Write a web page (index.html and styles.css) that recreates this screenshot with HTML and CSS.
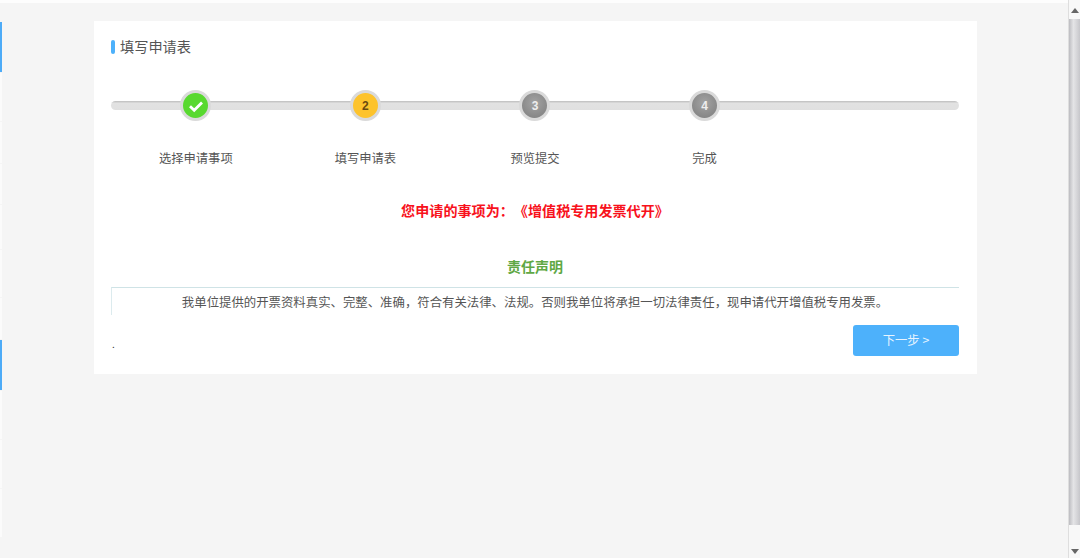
FILE: index.html
```html
<!DOCTYPE html>
<html lang="zh-CN">
<head>
<meta charset="utf-8">
<title>填写申请表</title>
<link rel="stylesheet" href="styles.css">
</head>
<body>
<div class="page">
  <aside class="rail">
    <i class="rail-item rail-active"></i>
    <i class="rail-item r48"></i>
    <i class="rail-item r41"></i>
    <i class="rail-item r40"></i>
    <i class="rail-item r44"></i>
    <i class="rail-item r47"></i>
    <i class="rail-item r41"></i>
    <i class="rail-item rail-active"></i>
    <i class="rail-item r48"></i>
    <i class="rail-item r48"></i>
    <i class="rail-item r48"></i>
  </aside>
  <main class="content">
    <section class="card">
      <h1 class="title">填写申请表</h1>
      <div class="track">
        <div class="dot dot-done">
          <svg class="check" viewBox="0 0 16 16" width="16" height="16"><path d="M2 8.2 6.2 12.2 14 4.6" fill="none" stroke="#fff" stroke-width="2.8"/></svg>
        </div>
        <div class="dot dot-current">2</div>
        <div class="dot dot-todo">3</div>
        <div class="dot dot-todo">4</div>
      </div>
      <div class="labels">
        <span>选择申请事项</span>
        <span>填写申请表</span>
        <span>预览提交</span>
        <span>完成</span>
      </div>
      <p class="subject">您申请的事项为：《增值税专用发票代开》</p>
      <h2 class="heading">责任声明</h2>
      <div class="statement">我单位提供的开票资料真实、完整、准确，符合有关法律、法规。否则我单位将承担一切法律责任，现申请代开增值税专用发票。</div>
      <div class="actions">
        <span class="mark">.</span>
        <button class="next" type="button">下一步 &gt;</button>
      </div>
    </section>
  </main>
  <div class="scrollbar">
    <svg class="arrow" viewBox="0 0 8 5" width="8" height="5"><path d="M4 0 8 5H0z" fill="#666"/></svg>
    <div class="thumb"></div>
    <svg class="arrow" viewBox="0 0 8 5" width="8" height="5"><path d="M0 0H8L4 5z" fill="#666"/></svg>
  </div>
</div>
</body>
</html>
```
FILE: styles.css
```css
* { box-sizing: border-box; }
html, body { margin: 0; height: 100%; overflow: hidden; }
body {
  background: #f5f5f5;
  font-family: "Noto Sans CJK SC", "Liberation Sans", sans-serif;
  color: #333;
  text-spacing-trim: space-all;
}
.page { display: flex; height: 558px; border-top: 3px solid #fdfdfd; }
.rail { width: 2px; display: flex; flex-direction: column; gap: 1px; padding-top: 19px; flex: none; }
.rail-item { display: block; background: #fbfbfb; flex: none; }
.r40 { height: 40px; }
.r41 { height: 41px; }
.r44 { height: 44px; }
.r47 { height: 47px; }
.r48 { height: 48px; }
.rail-active { height: 50px; background: #4dabf7; }
.content { flex: 1; padding: 18px 91px 0 92px; min-width: 0; }
.card { background: #fff; height: 353px; padding: 0 18px 0 17px; }
.title {
  margin: 0;
  padding: 16px 0 0 9px;
  height: 52px;
  font-size: 14.2px;
  font-weight: 400;
  line-height: 18px;
  color: #555;
  position: relative;
}
.title::before {
  content: "";
  position: absolute;
  left: 0;
  top: 19px;
  width: 4px;
  height: 14px;
  border-radius: 2px;
  background: #4db1fb;
}
.track {
  display: grid;
  grid-template-columns: repeat(5, 1fr);
  grid-template-rows: 9px;
  justify-items: center;
  align-items: center;
  height: 9px;
  margin-top: 28px;
  background: linear-gradient(#c2c2c2 0, #c8c8c8 1px, #e2e2e2 2px, #e0e0e0 100%);
  border-radius: 5px;
}
.dot {
  width: 31px;
  height: 31px;
  border-radius: 50%;
  border: 3.5px solid #dadada;
  display: flex;
  align-items: center;
  justify-content: center;
  font: bold 12px/1 "Liberation Sans", sans-serif;
}
.dot-done { background: #58d92f; }
.dot-current { background: #fdc32c; color: #6a4a10; }
.dot-todo { background: radial-gradient(circle at 50% 40%, #a4a4a4, #7c7c7c); color: #eee; }
.check { display: block; }
.labels {
  display: grid;
  grid-template-columns: repeat(5, 1fr);
  justify-items: center;
  margin-top: 39px;
  font-size: 12.3px;
  line-height: 18px;
  color: #555;
}
.subject {
  margin: 33px 0 0;
  text-align: center;
  font-size: 14.1px;
  font-weight: 700;
  line-height: 20px;
  color: #f8111c;
}
.heading {
  margin: 36px 0 0;
  text-align: center;
  font-size: 14px;
  font-weight: 700;
  line-height: 20px;
  color: #5fa845;
}
.statement {
  height: 28px;
  margin-top: 11px;
  padding-right: 1px;
  border-top: 1px solid #cfe3e6;
  border-left: 1px solid #dcebee;
  text-align: center;
  font-size: 12.4px;
  line-height: 29px;
  color: #555;
}
.actions {
  display: flex;
  justify-content: space-between;
  margin-top: 10px;
}
.mark { font-size: 10px; line-height: 16px; padding: 11px 0 0 1px; color: #333; }
.next {
  width: 106px;
  height: 31px;
  padding: 0;
  border: 0;
  border-radius: 3px;
  background: #4db1fb;
  color: #e6f4ff;
  font: 400 12.3px/31px "Noto Sans CJK SC", "Liberation Sans", sans-serif;
}
.scrollbar {
  width: 12px;
  flex: none;
  margin-top: -3px;
  background: #f8f8f8;
  border-left: 1px solid #dedede;
  display: flex;
  flex-direction: column;
  align-items: center;
  padding-top: 8px;
}
.arrow { display: block; flex: none; }
.thumb {
  width: 11px;
  height: 506px;
  margin: 6px 0 24px;
  flex: none;
  background: linear-gradient(90deg, #bcbcc0, #e4e4e6 40%, #d6d6d9 70%, #c6c6ca);
}
```
